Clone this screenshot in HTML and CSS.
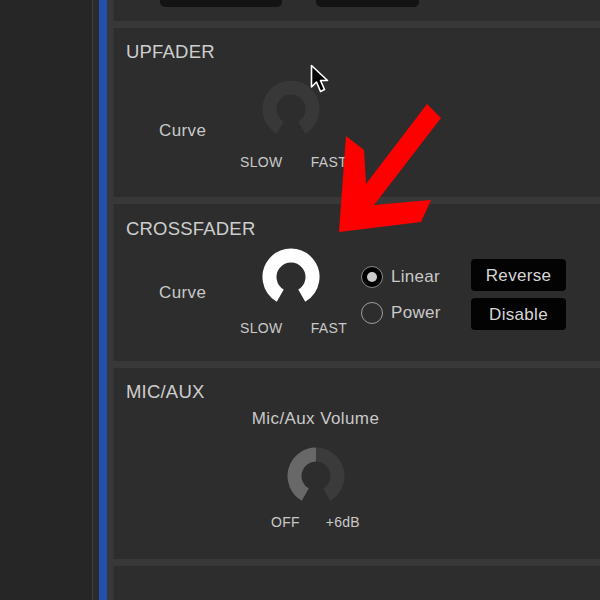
FILE: index.html
```html
<!DOCTYPE html>
<html lang="en">
<head>
    <meta charset="UTF-8">
    <meta name="viewport" content="width=device-width, initial-scale=1.0">
    <title>Mixer Settings</title>
    <link rel="stylesheet" href="styles.css">
</head>
<body>
    <div class="app">
        <aside class="sidebar"></aside>
        <div class="gutter"></div>
        <div class="accent"></div>

        <main class="panels">
            <section class="panel panel-top">
                <div class="tabs">
                    <span class="tab tab-a"></span>
                    <span class="tab tab-b"></span>
                </div>
            </section>

            <!-- Upfader -->
            <section class="panel panel-upfader">
                <h2>UPFADER</h2>
                <div class="row">
                    <span class="label curve">Curve</span>
                    <div class="knob-group">
                        <svg class="knob" viewBox="0 0 58 58">
                            <path d="M18.25 47.62 A21.5 21.5 0 1 1 39.75 47.62" stroke="#383838" />
                        </svg>
                        <div class="range"><span>SLOW</span><span>FAST</span></div>
                    </div>
                </div>
            </section>

            <!-- Crossfader -->
            <section class="panel panel-crossfader">
                <h2>CROSSFADER</h2>
                <div class="row">
                    <span class="label curve">Curve</span>
                    <div class="knob-group">
                        <svg class="knob" viewBox="0 0 58 58">
                            <path d="M18.25 47.62 A21.5 21.5 0 1 1 39.75 47.62" stroke="#ffffff" />
                        </svg>
                        <div class="range"><span>SLOW</span><span>FAST</span></div>
                    </div>
                    <div class="radios">
                        <label class="radio"><span class="dot checked"></span>Linear</label>
                        <label class="radio"><span class="dot"></span>Power</label>
                    </div>
                    <div class="buttons">
                        <button class="btn">Reverse</button>
                        <button class="btn">Disable</button>
                    </div>
                </div>
            </section>

            <!-- Mic / Aux -->
            <section class="panel panel-mic">
                <h2>MIC/AUX</h2>
                <div class="volume">
                    <div class="label">Mic/Aux Volume</div>
                    <svg class="knob" viewBox="0 0 58 58">
                        <path d="M18.25 47.62 A21.5 21.5 0 0 1 29 7.5" stroke="#686868" />
                        <path d="M29 7.5 A21.5 21.5 0 0 1 39.75 47.62" stroke="#3b3b3b" />
                    </svg>
                    <div class="range"><span>OFF</span><span>+6dB</span></div>
                </div>
            </section>

            <section class="panel panel-rest"></section>
        </main>

        <svg class="cursor" viewBox="0 0 20 30">
            <path d="M1.5 1.5 L1.5 23 L6.5 18 L10.5 27.5 L14.5 25.5 L10.5 16.5 L17.5 16.5 Z" fill="#000" stroke="#fff" stroke-width="1.6" stroke-linejoin="round" />
        </svg>

        <svg class="arrow" viewBox="0 0 600 600">
            <polygon points="339,232 346,136 364,150 366,184 427,104 441,118 374,205 431,200 421,222" fill="#ff0000" />
        </svg>
    </div>
</body>
</html>
```

FILE: styles.css
```css
* {
    margin: 0;
    padding: 0;
    box-sizing: border-box;
}

body {
    background: #262626;
    font-family: 'Liberation Sans', Arial, sans-serif;
    color: #c9c9c9;
    width: 600px;
    height: 600px;
    overflow: hidden;
}

.app {
    position: relative;
    display: flex;
    height: 600px;
}

.sidebar {
    width: 93px;
    background: #262626;
    border-right: 1px solid #3d3d3d;
}

.gutter {
    width: 6px;
    background: #2b2b2b;
}

.accent {
    width: 8px;
    background: #2151ab;
}

.panels {
    flex: 1;
    display: flex;
    flex-direction: column;
    gap: 7px;
    padding-left: 6px;
    background: #383838;
    overflow: hidden;
}

.panel {
    background: #2d2d2d;
    border-left: 1px solid #333333;
    padding-left: 12px;
    flex-shrink: 0;
}

h2 {
    font-size: 18.5px;
    font-weight: normal;
    line-height: 20px;
    letter-spacing: 0.2px;
    color: #cdcdcd;
}

.label {
    font-size: 17px;
    line-height: 20px;
    letter-spacing: 0.4px;
}

.panel-top {
    height: 21px;
}

.tabs {
    display: flex;
    gap: 34px;
    padding-left: 34px;
}

.tab {
    display: block;
    height: 7px;
    background: #131313;
    border-radius: 0 0 5px 5px;
}

.tab-a {
    width: 122px;
}

.tab-b {
    width: 103px;
}

.row {
    display: flex;
    align-items: flex-start;
}

.curve {
    width: 114px;
    padding-left: 33px;
}

.knob-group {
    width: 110px;
}

.knob {
    display: block;
    width: 58px;
    height: 58px;
    fill: none;
}

.knob path {
    stroke-width: 14;
}

.knob-group .knob {
    margin-left: 22px;
}

.range {
    display: flex;
    justify-content: space-between;
    font-size: 14px;
    line-height: 16px;
    letter-spacing: 0.3px;
}

.knob-group .range {
    padding-right: 3px;
}

/* Upfader */
.panel-upfader {
    height: 169px;
    padding-top: 14px;
}

.panel-upfader .row {
    margin-top: 18px;
}

.panel-upfader .curve {
    padding-top: 41px;
}

.panel-upfader .range {
    margin-top: 16px;
}

/* Crossfader */
.panel-crossfader {
    height: 157px;
    padding-top: 15px;
}

.panel-crossfader .row {
    margin-top: 9px;
}

.panel-crossfader .curve {
    padding-top: 35px;
}

.panel-crossfader .range {
    margin-top: 14px;
}

.radios {
    width: 100px;
    margin-left: 11px;
    margin-top: 18px;
    display: flex;
    flex-direction: column;
    gap: 14px;
}

.radio {
    display: flex;
    align-items: center;
    gap: 8px;
    font-size: 17px;
    line-height: 22px;
    letter-spacing: 0.3px;
}

.dot {
    width: 22px;
    height: 22px;
    border-radius: 50%;
    border: 1.5px solid #9c9c9c;
    display: flex;
    align-items: center;
    justify-content: center;
}

.dot.checked {
    background: #000;
    border-color: #8a8a8a;
}

.dot.checked::after {
    content: '';
    width: 10px;
    height: 10px;
    border-radius: 50%;
    background: #cacaca;
}

.buttons {
    margin-left: 10px;
    margin-top: 11px;
    display: flex;
    flex-direction: column;
    gap: 7px;
}

.btn {
    width: 95px;
    height: 32px;
    padding-top: 1px;
    background: #030303;
    border: none;
    border-radius: 4px;
    color: #d6d6d6;
    font-family: inherit;
    font-size: 17px;
    letter-spacing: 0.3px;
}

/* Mic / Aux */
.panel-mic {
    height: 191px;
    padding-top: 14px;
}

.volume {
    width: 131px;
    margin-left: 124px;
    margin-top: 7px;
    text-align: center;
}

.volume .knob {
    margin: 18px auto 0;
}

.volume .range {
    width: 89px;
    margin: 9px auto 0;
}

.panel-rest {
    flex: 1;
}

/* overlays */
.cursor {
    position: absolute;
    left: 310px;
    top: 64px;
    width: 20px;
    height: 30px;
}

.arrow {
    position: absolute;
    left: 0;
    top: 0;
    width: 600px;
    height: 600px;
    pointer-events: none;
}
```
